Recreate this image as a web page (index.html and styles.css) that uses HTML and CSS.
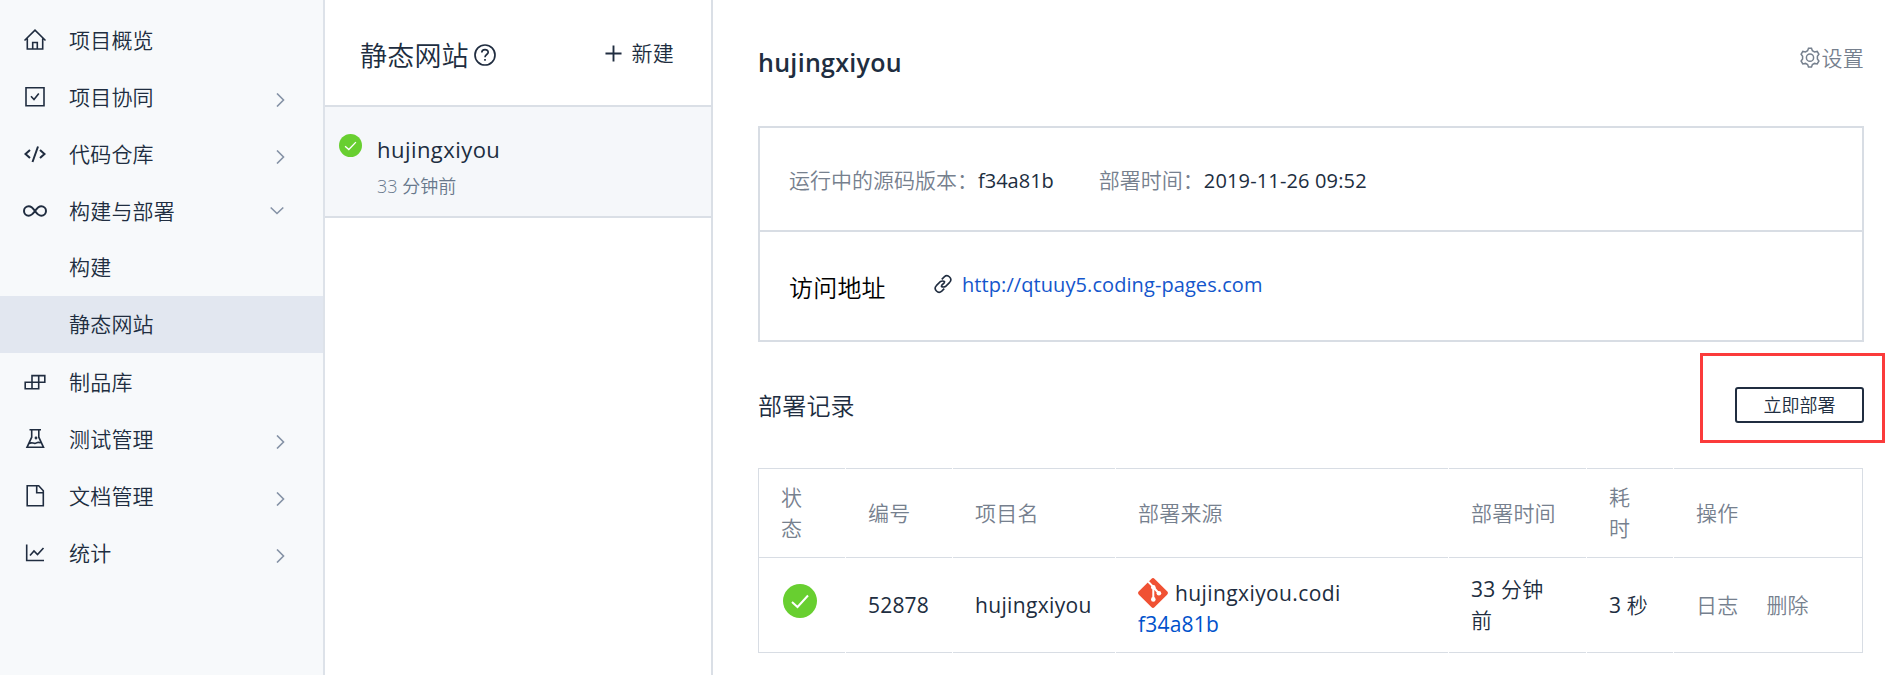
FILE: index.html
```html
<!DOCTYPE html>
<html lang="zh-CN">
<head>
<meta charset="utf-8">
<title>静态网站</title>
<link rel="stylesheet" href="styles.css">
</head>
<body>
<div class="app">
  <nav class="sidebar">
    <a class="nav"><svg class="nav-icon" viewBox="0 0 24 24"><path d="M1.5 12.5 12 2.2l10.5 10.3M4.3 10.5V21h15.4V10.5M9.7 21v-6.5h4.6V21"/></svg><span>项目概览</span></a>
    <a class="nav"><svg class="nav-icon" viewBox="0 0 24 24"><path d="M3 2.7h18v18H3zM8 11.2l3 3.3 4.8-6"/></svg><span>项目协同</span><svg class="chevron" viewBox="0 0 14 14"><path d="m4 .5 6.500 6.500L4 13.500"/></svg></a>
    <a class="nav"><svg class="nav-icon bold" viewBox="0 0 24 24"><path d="M7 8 2.5 12 7 16M17 8l4.500 4-4.500 4M15 4.500 9.500 20"/></svg><span>代码仓库</span><svg class="chevron" viewBox="0 0 14 14"><path d="m4 .5 6.500 6.500L4 13.500"/></svg></a>
    <a class="nav"><svg class="nav-icon bold" viewBox="0 0 24 24"><path d="M12 12c-2-2.900-3.600-4.700-6.300-4.700a4.700 4.700 0 0 0 0 9.400c2.700 0 4.300-1.800 6.300-4.700s3.600-4.700 6.300-4.700a4.700 4.700 0 0 1 0 9.400c-2.700 0-4.300-1.800-6.300-4.700z"/></svg><span>构建与部署</span><svg class="chevron down" viewBox="0 0 14 14"><path d="m.7 3.500 6.300 6 6.300-6"/></svg></a>
    <a class="nav sub"><span>构建</span></a>
    <a class="nav sub active"><span>静态网站</span></a>
    <a class="nav"><svg class="nav-icon" viewBox="0 0 24 24"><path d="M2.200 12.200h13.500v6.600H2.200zM9 5.600h12.800v6.600H9zM9 12.200v6.600M15.700 5.600v6.600"/></svg><span>制品库</span></a>
    <a class="nav"><svg class="nav-icon" viewBox="0 0 24 24"><path d="M6.500 2.700h11.500M8.700 2.700v7.500L4 20.300h16.500l-4.700-10.100V2.700M6 16.500c3-2 5 1 7.500-.6 1.600-1 2.500-.8 4.200 0"/><circle cx="13" cy="11" r=".6"/></svg><span>测试管理</span><svg class="chevron" viewBox="0 0 14 14"><path d="m4 .5 6.500 6.500L4 13.500"/></svg></a>
    <a class="nav"><svg class="nav-icon" viewBox="0 0 24 24"><path d="M4.200 1.800h11.500l4.600 5v15H4.200zM13.700 1.800v7h6.600"/></svg><span>文档管理</span><svg class="chevron" viewBox="0 0 14 14"><path d="m4 .5 6.500 6.500L4 13.500"/></svg></a>
    <a class="nav"><svg class="nav-icon" viewBox="0 0 24 24"><path d="M3.700 3.500v16H21M7 14.500l4-4.500 3.500 3.500L20.500 7"/></svg><span>统计</span><svg class="chevron" viewBox="0 0 14 14"><path d="m4 .5 6.500 6.500L4 13.500"/></svg></a>
  </nav>

  <section class="sites">
    <header class="sites-head">
      <h2 class="sites-title">静态网站</h2>
      <svg class="help" viewBox="0 0 22 22"><circle cx="11" cy="11" r="10"/><path d="M7.800 8.500c0-4 6.400-3.800 6.400-.3 0 2.300-3.200 2.400-3.200 5M11 15v1.700"/></svg>
      <a class="create"><svg class="plus" viewBox="0 0 18 18"><path d="M9 .5v17M.5 9h17"/></svg><span>新建</span></a>
    </header>
    <div class="site">
      <svg class="site-ok" viewBox="0 0 34 34"><circle cx="17" cy="17" r="17"/><path d="m9 18 5.500 5L25 12"/></svg>
      <div>
        <div class="site-name">hujingxiyou</div>
        <div class="site-time">33 分钟前</div>
      </div>
    </div>
  </section>

  <main class="main">
    <header class="main-head">
      <h1 class="main-title">hujingxiyou</h1>
      <a class="settings"><svg class="gear" viewBox="0 0 22 22"><path d="M8.600 3.700 9.500 1.200h3l.9 2.500 2.100 1.200 2.700-.5 1.700 2.900-1.500 2v2.700l1.500 2-1.700 2.900-2.700-.5-2.100 1.200-.9 2.500h-3l-.9-2.500-2.100-1.200-2.700.5-1.700-2.900 1.500-2V9.300l-1.500-2 1.700-2.900 2.700.5z"/><circle cx="11" cy="10.700" r="3.600"/></svg><span>设置</span></a>
    </header>

    <div class="info">
      <div class="info-row">
        <span class="label">运行中的源码版本：</span><span class="hash">f34a81b</span>
        <span class="label time-label">部署时间：</span><span class="date">2019-11-26 09:52</span>
      </div>
      <div class="info-row address">
        <span class="address-label">访问地址</span>
        <svg class="link-icon" viewBox="0 0 24 24"><path d="M9.500 14.500a5 5 0 0 0 5.500.5l5-5a4.600 4.600 0 0 0-6.500-6.500L10.500 6.500M14.500 9.500A5 5 0 0 0 9 9l-5 5a4.600 4.600 0 0 0 6.500 6.500l3-3M9.800 14.200l4.400-4.400"/></svg>
        <a class="url">http://qtuuy5.coding-pages.com</a>
      </div>
    </div>

    <div class="records-head">
      <h3 class="records-title">部署记录</h3>
      <div class="deploy-wrap"><button class="deploy">立即部署</button><div class="highlight"></div></div>
    </div>

    <div class="table">
      <div class="cell th"><span class="stack">状态</span></div>
      <div class="cell th">编号</div>
      <div class="cell th">项目名</div>
      <div class="cell th">部署来源</div>
      <div class="cell th">部署时间</div>
      <div class="cell th"><span class="stack">耗时</span></div>
      <div class="cell th">操作</div>

      <div class="cell"><svg class="ok" viewBox="0 0 34 34"><circle cx="17" cy="17" r="17"/><path d="m9 18 5.500 5L25 11.500"/></svg></div>
      <div class="cell number">52878</div>
      <div class="cell name">hujingxiyou</div>
      <div class="cell source">
        <div class="repo"><svg class="git" viewBox="0 0 30 30"><path class="git-bg" d="M13.300.9a2.400 2.400 0 0 1 3.400 0l12.400 12.400a2.400 2.400 0 0 1 0 3.400L16.700 29.100a2.400 2.400 0 0 1-3.400 0L.9 16.700a2.400 2.400 0 0 1 0-3.400z"/><path class="git-line" d="m10 3.500 5.300 5.300V21M15.300 9l5.200 6"/><circle cx="15.300" cy="9.300" r="2.300"/><circle cx="15.300" cy="21.400" r="2.300"/><circle cx="20.900" cy="15.300" r="2.300"/></svg><span class="repo-name">hujingxiyou.codi</span></div>
        <a class="commit">f34a81b</a>
      </div>
      <div class="cell"><div><span class="digits">33</span> 分钟<br>前</div></div>
      <div class="cell"><div><span class="digits">3</span> 秒</div></div>
      <div class="cell actions"><a>日志</a><a>删除</a></div>
    </div>
  </main>
</div>
</body>
</html>
```
FILE: styles.css
```css
* { box-sizing: border-box; }
body {
  margin: 0;
  background: #fff;
  color: #202d40;
  font: 350 21px/31px "Open Sans", "Noto Sans CJK SC", sans-serif;
}
h1, h2, h3 { margin: 0; font-weight: 350; }
svg { flex: none; fill: none; stroke: currentColor; }
.app { display: flex; height: 675px; overflow: hidden; }

.sidebar { width: 325px; flex: none; padding-top: 11px; background: #f7f9fb; border-right: 2px solid #dde2e9; }
.nav { display: flex; align-items: center; height: 57px; padding: 2px 36px 0 23px; letter-spacing: .2px; }
.nav-icon { width: 24px; height: 24px; margin: 0 22px 2px 0; stroke-width: 1.6; }
.nav-icon.bold { stroke-width: 2; }
.chevron { width: 14px; height: 14px; margin: 5px 0 0 auto; stroke: #8592a6; stroke-width: 1.6; }
.chevron.down { margin: 0 3px 1px auto; }
.sub { padding: 0 36px 0 69px; }
.active { background: #e2e7f0; }

.sites { width: 388px; flex: none; border-right: 2px solid #dadfe6; }
.sites-head { display: flex; align-items: center; height: 107px; padding: 0 37px 0 35px; border-bottom: 2px solid #dadfe6; }
.sites-title { font-size: 27px; line-height: 40px; margin-top: 6px; letter-spacing: .2px; }
.help { width: 22px; height: 22px; margin: 4px 0 0 5px; stroke-width: 1.7; }
.create { display: flex; align-items: center; gap: 10px; margin-left: auto; margin-top: 2px; letter-spacing: .2px; }
.plus { width: 17px; height: 17px; stroke-width: 2; }
.site { display: flex; height: 111px; padding: 27px 14px 0; gap: 15px; background: #f5f7fa; border-bottom: 2px solid #dadfe6; }
.site-ok, .ok { stroke: #fff; stroke-width: 2; }
.site-ok { width: 23px; height: 23px; }
.site-ok circle, .ok circle { fill: #68cf30; stroke: none; }
.site-name { font-size: 22px; font-weight: 400; letter-spacing: .45px; line-height: 30px; }
.site-time { font-size: 18px; line-height: 28px; margin-top: 8px; color: #68788c; }

.main { flex: 1; min-width: 0; padding: 0 31px 0 45px; }
.main-head { display: flex; justify-content: space-between; height: 126px; }
.main-title { font-size: 25px; font-weight: 600; line-height: 36px; margin-top: 44px; letter-spacing: .3px; }
.settings { display: flex; align-items: center; height: 32px; margin-top: 42px; color: #76808e; letter-spacing: .3px; }
.gear { width: 22px; height: 22px; stroke-width: 1.5; }
.info { border: 2px solid #d8dde4; height: 216px; }
.info-row { display: flex; align-items: center; height: 104px; padding: 2px 0 0 29px; border-bottom: 2px solid #d8dde4; }
.label { color: #76808e; }
.hash, .date, .url { font-size: 20px; font-weight: 400; }
.date { letter-spacing: .15px; }
.time-label { margin-left: 45px; }
.address { height: 108px; padding-top: 0; border: 0; }
.address-label { width: 144px; font-size: 24px; color: #000; margin-top: 2px; letter-spacing: .2px; }
.link-icon { width: 20px; height: 20px; margin-top: -4px; stroke-width: 1.9; }
.url { margin: -4px 0 0 9px; letter-spacing: .08px; color: #1456cc; }
.records-head { display: flex; justify-content: space-between; height: 126px; padding-top: 45px; }
.records-title { font-size: 24px; line-height: 36px; margin-top: 1px; letter-spacing: .2px; }
.deploy-wrap { position: relative; height: 36px; }
.deploy { display: block; width: 129px; height: 36px; padding: 0; border: 2px solid #202d40; border-radius: 3px; background: #fff; color: #202d40; font: 350 18px/30px "Open Sans", "Noto Sans CJK SC", sans-serif; }
.highlight { position: absolute; left: -35px; top: -34px; width: 185px; height: 90px; border: 3px solid #fb3b3b; }

.table { display: grid; grid-template-columns: 86px 106px 162px 332px 137px 86px 1fr; column-gap: 1px; grid-template-rows: 90px 95px; width: 1105px; border: 1px solid #d8dde4; border-width: 0 1px; }
.cell { display: flex; align-items: center; padding-left: 22px; border-bottom: 1px solid #d8dde4; letter-spacing: .2px; }
.th { border-top: 1px solid #d8dde4; color: #76808e; }
.stack { width: 22px; }
.ok { width: 34px; height: 34px; margin: -8px 0 0 2px; }
.number, .name, .source, .digits { font-weight: 400; }
.name { letter-spacing: .35px; }
.source { flex-direction: column; align-items: flex-start; justify-content: center; padding-top: 7px; }
.repo { display: flex; align-items: center; gap: 7px; }
.git { width: 30px; height: 30px; margin-top: -1px; }
.git-bg { fill: #f05133; stroke: none; }
.git-line { stroke: #fff; stroke-width: 2; }
.git circle { fill: #fff; stroke: none; }
.repo-name { letter-spacing: .4px; }
.commit { color: #0052cc; }
.actions { gap: 28px; color: #76808e; }
```
